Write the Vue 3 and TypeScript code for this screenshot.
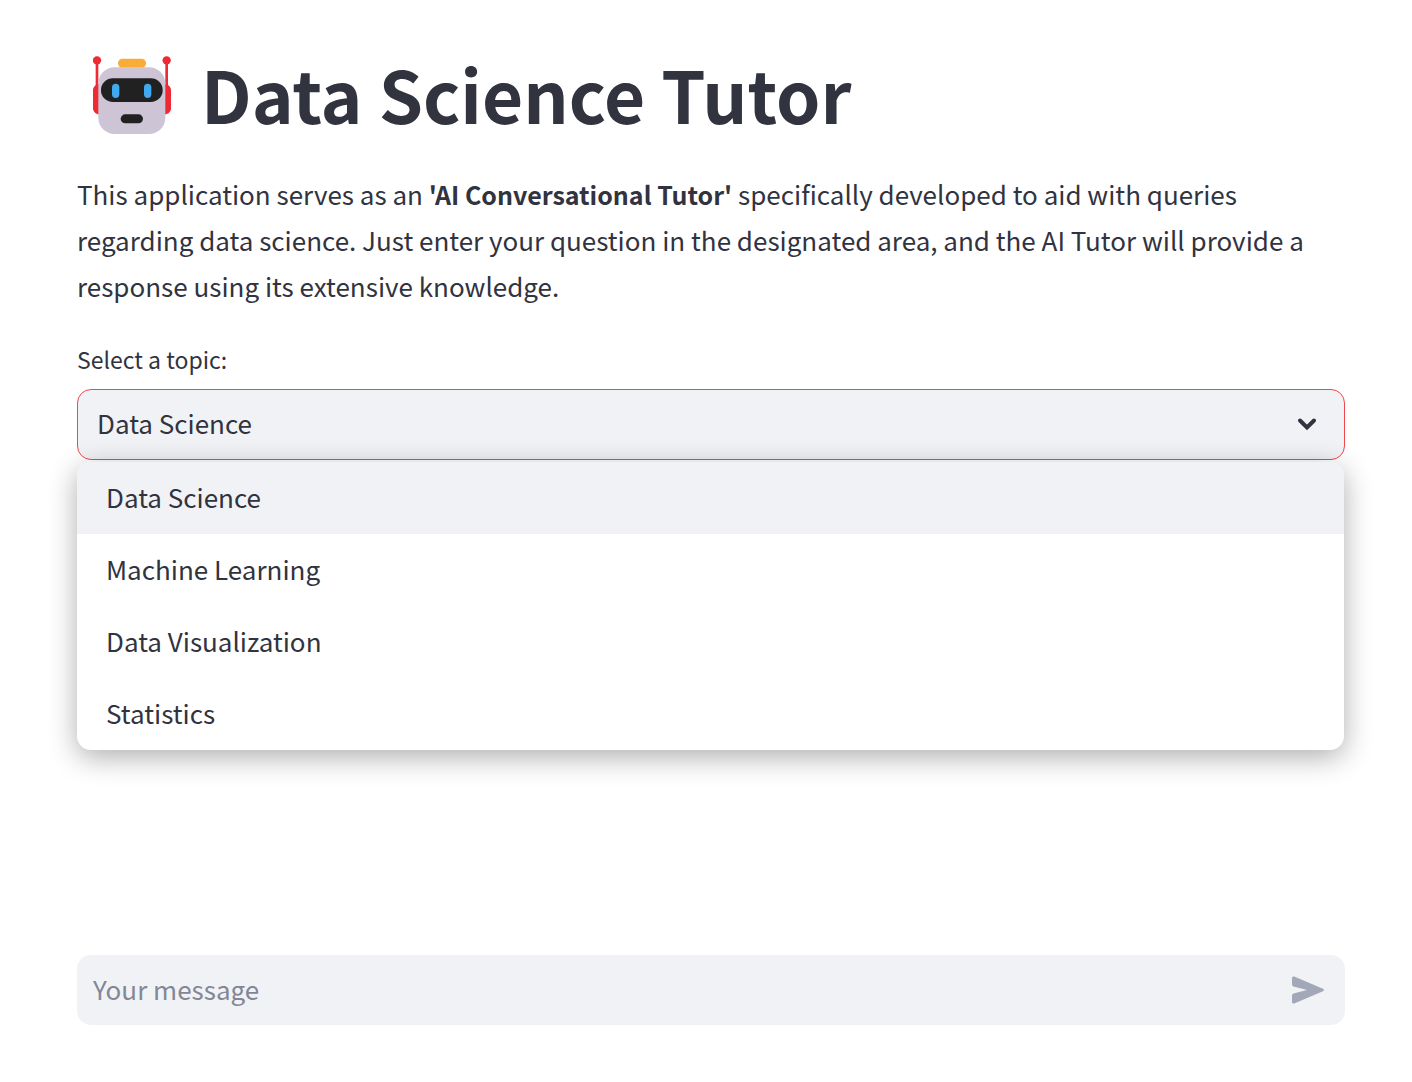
<script setup lang="ts">
import { ref } from 'vue'

const topics: string[] = ['Data Science', 'Machine Learning', 'Data Visualization', 'Statistics']
const selected = ref<string>(topics[0])
const open = ref<boolean>(true)
const message = ref<string>('')

function choose(topic: string): void {
  selected.value = topic
  open.value = false
}

function send(): void {
  message.value = ''
}
</script>

<template>
  <div class="page">
    <main class="content">
      <h1 class="title">
        <svg class="robot" viewBox="39 33 234 234" role="img" aria-label="Robot">
          <g fill="#ee2a35">
            <rect x="47" y="46" width="8" height="80" />
            <rect x="256" y="46" width="8" height="80" />
            <circle cx="51" cy="46" r="12.5" />
            <circle cx="260" cy="46" r="12.5" />
            <path d="M57 118v90c-10 0-18-8-18-18v-54c0-10 8-18 18-18z" />
            <path d="M255 118v90c10 0 18-8 18-18v-54c0-10-8-18-18-18z" />
          </g>
          <rect x="114" y="41" width="84" height="27" rx="13" fill="#f9ad38" />
          <rect x="55" y="67" width="201" height="200" rx="49" fill="#cdc4d6" />
          <rect x="63" y="100" width="185" height="71" rx="35.5" fill="#212121" />
          <rect x="96" y="116" width="22" height="43" rx="11" fill="#40a9ef" />
          <rect x="192" y="116" width="22" height="43" rx="11" fill="#40a9ef" />
          <rect x="122" y="208" width="67" height="27" rx="13.5" fill="#212121" />
        </svg>
        <span class="title-text">Data Science Tutor</span>
      </h1>

      <p class="intro">
        This application serves as an <strong>'AI Conversational Tutor'</strong> specifically developed to aid with
        queries regarding data science. Just enter your question in the designated area, and the AI Tutor will provide a
        response using its extensive knowledge.
      </p>

      <div class="field">
        <label class="label" for="topic">Select a topic:</label>
        <div class="picker">
          <select id="topic" v-model="selected" class="select" @mousedown.prevent="open = !open">
            <option v-for="topic in topics" :key="topic" :value="topic">{{ topic }}</option>
          </select>
          <svg class="chevron" viewBox="0 0 20 14" aria-hidden="true">
            <path d="M3 3.5l7 7 7-7" />
          </svg>
          <ul v-if="open" class="menu" role="listbox" aria-label="Topics">
            <li
              v-for="topic in topics"
              :key="topic"
              class="item"
              :class="{ active: topic === selected }"
              role="option"
              :aria-selected="topic === selected"
              @click="choose(topic)"
            >
              {{ topic }}
            </li>
          </ul>
        </div>
      </div>
    </main>

    <form class="chat" @submit.prevent="send">
      <input v-model="message" class="chat-input" type="text" placeholder="Your message" aria-label="Your message" />
      <button class="send" type="submit" aria-label="Send">
        <svg viewBox="0 0 32 28" aria-hidden="true">
          <path
            d="M0 2v6.500q0 1.500 1.500 1.900L15 14 1.500 17.600Q0 18 0 19.500V26q0 2.200 2.200 1.400L31 15.200q2-1.200 0-2.400L2.200 .600Q0-.200 0 2z"
          />
        </svg>
      </button>
    </form>
  </div>
</template>

<style>
body {
  margin: 0;
  background: #ffffff;
}
</style>

<style scoped>
.page {
  box-sizing: border-box;
  display: flex;
  flex-direction: column;
  justify-content: space-between;
  min-height: 100vh;
  padding: 48px 67px 57px 77px;
  color: #31333f;
  font-family: "Noto Sans CJK SC", "Source Sans Pro", sans-serif;
  font-size: 26px;
}

.title {
  display: flex;
  align-items: center;
  gap: 30px;
  margin: 0;
  padding-left: 16px;
  font-size: 71px;
  font-weight: 700;
  line-height: 90px;
}

.title-text {
  padding-bottom: 4px;
}

.robot {
  flex: none;
  width: 78px;
  height: 78px;
}

.intro {
  margin: 29px 0 0;
  line-height: 46px;
}

/* The bold face runs wide, so it is set one pixel smaller than the text around it. */
.intro strong {
  font-size: 25px;
  font-weight: 600;
}

.field {
  margin-top: 33px;
}

.label {
  display: block;
  margin-bottom: 12px;
  font-size: 23px;
  line-height: 35px;
}

.picker {
  position: relative;
}

.select {
  appearance: none;
  box-sizing: border-box;
  display: block;
  width: 100%;
  height: 71px;
  padding: 0 60px 4px 19px;
  border: 1px solid #f0474c;
  border-radius: 14px;
  outline: none;
  background: #f0f2f6;
  color: inherit;
  font: inherit;
}

.chevron {
  position: absolute;
  top: 28px;
  right: 28px;
  width: 20px;
  height: 14px;
  fill: none;
  stroke: #31333f;
  stroke-width: 4;
  stroke-linecap: round;
  pointer-events: none;
}

.menu {
  position: absolute;
  top: 100%;
  left: 0;
  right: 1px;
  margin: 2px 0 0;
  padding: 0;
  overflow: hidden;
  list-style: none;
  border-radius: 14px;
  background: #ffffff;
  box-shadow: 0 7px 29px rgba(0, 0, 0, 0.32);
}

.item {
  padding: 0 29px 2px;
  line-height: 70px;
  cursor: pointer;
}

.item.active {
  background: #f0f2f6;
}

.chat {
  display: flex;
  align-items: center;
  border-radius: 14px;
  background: #f0f2f6;
}

.chat-input {
  flex: 1;
  min-width: 0;
  height: 70px;
  padding: 0 16px 4px;
  box-sizing: border-box;
  border: 0;
  outline: none;
  background: transparent;
  color: inherit;
  font: inherit;
}

.chat-input::placeholder {
  color: #838795;
  opacity: 1;
}

.send {
  display: flex;
  padding: 0;
  margin-right: 21px;
  border: 0;
  background: transparent;
  cursor: pointer;
}

.send svg {
  width: 32px;
  height: 28px;
  fill: #a3a8b8;
}
</style>
